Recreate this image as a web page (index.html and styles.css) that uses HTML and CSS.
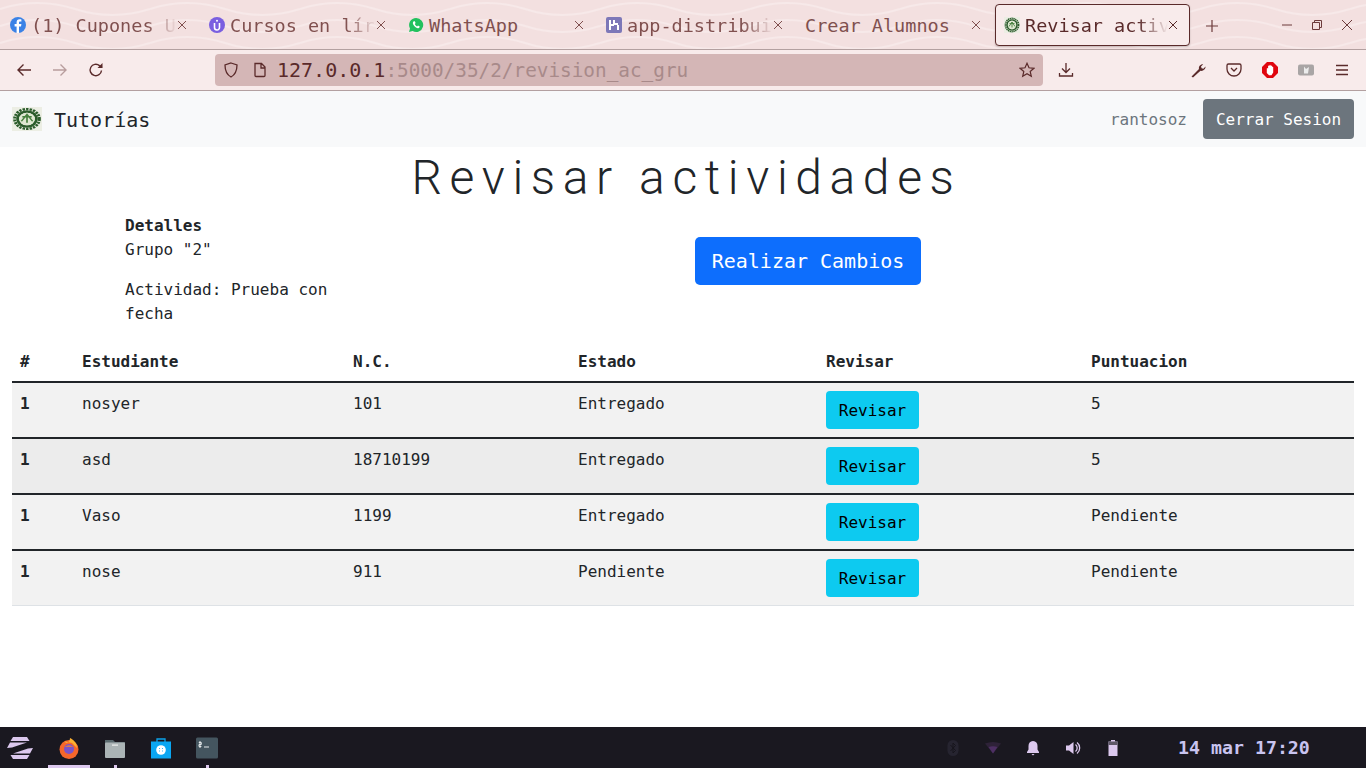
FILE: index.html
```html
<!DOCTYPE html>
<html lang="en">
<head>
    <meta charset="UTF-8">
    <meta name="viewport" content="width=device-width, initial-scale=1.0">
    <title>Revisar actividades</title>
    <link rel="stylesheet" href="styles.css">
</head>
<body>
    <header class="browser">
        <div class="tabbar">
            <svg class="waves" width="1366" height="49" aria-hidden="true">
                <defs>
                    <pattern id="wave" width="150" height="17" patternUnits="userSpaceOnUse">
                        <path d="M0 9 C25 1 50 1 75 9 S125 17 150 9" fill="none" stroke="#f7e9e9" stroke-width="2"/>
                    </pattern>
                </defs>
                <rect width="1366" height="49" fill="url(#wave)"/>
            </svg>
            <div class="tab tab-1">
                <svg class="favicon" viewBox="0 0 16 16"><circle cx="8" cy="8" r="8" fill="#3b82e6"/><path d="M9 16V9.500h2l.4-2.400H9V5.800c0-.8.3-1.200 1.200-1.200h1.200V2.500c-.5-.1-1.100-.2-1.800-.2-1.900 0-3 1.100-3 3.100v1.700H4.600v2.400h2V16z" fill="#fff"/></svg>
                <span class="tab-title fade">(1) Cupones U</span>
                <svg class="tab-close" viewBox="0 0 10 10"><path d="M1 1l8 8M9 1L1 9"/></svg>
            </div>
            <div class="tab tab-2">
                <svg class="favicon" viewBox="0 0 16 16"><circle cx="8" cy="8" r="8" fill="#7a5fe0"/><path d="M5.500 6v4.500a2.500 2.500 0 0 0 5 0V6" fill="none" stroke="#fff" stroke-width="1.600"/><circle cx="8" cy="3.800" r="1" fill="#fff"/></svg>
                <span class="tab-title fade">Cursos en lír</span>
                <svg class="tab-close" viewBox="0 0 10 10"><path d="M1 1l8 8M9 1L1 9"/></svg>
            </div>
            <div class="tab tab-3">
                <svg class="favicon" viewBox="0 0 16 16"><path d="M8 1a7 7 0 0 0-6 10.500L1 15l3.600-1A7 7 0 1 0 8 1z" fill="#22c15e"/><path d="M5.500 4.500c-1 1-.8 2.600.6 4.300 1.500 1.800 3.400 2.900 4.700 2.200.6-.3 1-1 .9-1.500L10 8.500l-.9.900C8.300 9 7.200 8 6.800 7l.8-.9L6.800 4.300c-.5-.1-1 0-1.300.2z" fill="#fff"/></svg>
                <span class="tab-title">WhatsApp</span>
                <svg class="tab-close" viewBox="0 0 10 10"><path d="M1 1l8 8M9 1L1 9"/></svg>
            </div>
            <div class="tab tab-4">
                <svg class="favicon" viewBox="0 0 16 16"><rect width="16" height="16" rx="2" fill="#7d78b8"/><path d="M4 3v10M4 8h4M8 3v4h4M12 8v5" fill="none" stroke="#fff" stroke-width="2"/></svg>
                <span class="tab-title fade">app-distribui</span>
                <svg class="tab-close" viewBox="0 0 10 10"><path d="M1 1l8 8M9 1L1 9"/></svg>
            </div>
            <div class="tab tab-5">
                <span class="tab-title">Crear Alumnos</span>
                <svg class="tab-close" viewBox="0 0 10 10"><path d="M1 1l8 8M9 1L1 9"/></svg>
            </div>
            <div class="tab tab-6">
                <svg class="favicon" viewBox="0 0 16 16"><use href="#seal"/></svg>
                <span class="tab-title fade">Revisar activ</span>
                <svg class="tab-close" viewBox="0 0 10 10"><path d="M1 1l8 8M9 1L1 9"/></svg>
            </div>
            <svg class="newtab" viewBox="0 0 12 12"><path d="M6 0v12M0 6h12" stroke="#6d3b3b" stroke-width="1.200"/></svg>
            <div class="window-controls">
                <svg viewBox="0 0 12 12"><path d="M1 6h10" stroke="#6d3b3b"/></svg>
                <svg viewBox="0 0 12 12"><path d="M1.500 3.500h7v7h-7zM3.500 3.500v-2h7v7h-2" fill="none" stroke="#6d3b3b"/></svg>
                <svg viewBox="0 0 12 12"><path d="M1 1l10 10M11 1L1 11" stroke="#6d3b3b"/></svg>
            </div>
        </div>
        <div class="toolbar">
            <div class="nav-buttons">
                <svg viewBox="0 0 16 16"><path d="M15 8H2M7.500 2.500L2 8l5.500 5.500" fill="none" stroke="#5a2a2a" stroke-width="1.400"/></svg>
                <svg class="dim" viewBox="0 0 16 16"><path d="M1 8h13M8.500 2.500L14 8l-5.500 5.500" fill="none" stroke="#5a2a2a" stroke-width="1.400"/></svg>
                <svg viewBox="0 0 16 16"><path d="M13.500 8.500A5.700 5.700 0 1 1 11.500 3.600L14 5.500" fill="none" stroke="#5a2a2a" stroke-width="1.400"/><path d="M14.500 1v5h-5z" fill="#5a2a2a"/></svg>
            </div>
            <div class="urlbar">
                <svg class="url-icon" viewBox="0 0 16 16"><path d="M8 1l6 2c0 6-1.500 9.500-6 12C3.500 12.500 2 9 2 3z" fill="none" stroke="#5a2a2a" stroke-width="1.300"/></svg>
                <svg class="url-icon" viewBox="0 0 16 16"><path d="M3 1.500h6.500L13 5v8.500a1 1 0 0 1-1 1H4a1 1 0 0 1-1-1zM9 2v4h4" fill="none" stroke="#5a2a2a" stroke-width="1.300"/></svg>
                <span class="url"><span class="host">127.0.0.1</span>:5000/35/2/revision_ac_gru</span>
                <svg class="url-star" viewBox="0 0 16 16"><path d="M8 1.300l2 4.500 4.900.5-3.700 3.200 1.100 4.800L8 11.800l-4.300 2.500 1.100-4.800L1.100 6.300 6 5.800z" fill="none" stroke="#5a2a2a" stroke-width="1.200"/></svg>
            </div>
            <svg class="tool tool-download" viewBox="0 0 16 16"><path d="M8 1v9M4 6.500L8 10.500l4-4M1.500 11v3h13v-3" fill="none" stroke="#5a2a2a" stroke-width="1.300"/></svg>
            <div class="tools-right">
                <svg class="tool" viewBox="0 0 16 16"><path d="M1.500 14.500L9 7c-.6-2.400 1.200-5 4.200-4.800L11 4.400l.6 1.800 1.800.6 2.100-2.200C15.700 7.500 13 9.400 10.500 8.800L3 15.500z" fill="#5a2a2a"/></svg>
                <svg class="tool" viewBox="0 0 16 16"><path d="M2.500 2h11A1.500 1.500 0 0 1 15 3.500V7A7 7 0 0 1 1 7V3.500A1.500 1.500 0 0 1 2.500 2z" fill="none" stroke="#5a2a2a" stroke-width="1.300"/><path d="M5 6l3 3 3-3" fill="none" stroke="#5a2a2a" stroke-width="1.300"/></svg>
                <svg class="tool" viewBox="0 0 16 16"><path d="M5 0h6l5 5v6l-5 5H5l-5-5V5z" fill="#e0060f"/><path d="M4.800 11V6.500a.7.700 0 0 1 1.300 0V4a.7.700 0 0 1 1.300 0V3.300a.7.700 0 0 1 1.300 0V4a.7.700 0 0 1 1.300 0v1a.7.700 0 0 1 1.200 0v5.500L9.500 13.200H7z" fill="#fff"/></svg>
                <svg class="tool" viewBox="0 0 16 16"><rect y="2.500" width="16" height="11" rx="2" fill="#a9a5a5"/><path d="M6 4.500l2 2.500 3-2-1 6.500H6z" fill="#ececec"/></svg>
                <svg class="tool" viewBox="0 0 16 16"><path d="M2 3.500h12M2 8h12M2 12.500h12" stroke="#5a2a2a" stroke-width="1.300"/></svg>
            </div>
        </div>
    </header>

    <nav class="navbar">
        <a class="brand">
            <svg class="seal" viewBox="0 0 16 16" preserveAspectRatio="none">
                <g id="seal">
                    <rect width="16" height="16" fill="#eceee4"/>
                    <circle cx="8" cy="8" r="6.600" fill="none" stroke="#2b5c2b" stroke-width="1.600" stroke-dasharray="1.300 .6"/>
                    <circle cx="8" cy="8" r="5" fill="none" stroke="#2b5c2b" stroke-width="1.600"/>
                    <circle cx="8" cy="8" r="4.200" fill="#dfe8d2"/>
                    <path d="M5 9.500L8 5l3 4.500M8 5v5.500M5.500 6.500h5" fill="none" stroke="#47813f" stroke-width=".9"/>
                </g>
            </svg>
            <span class="brand-name">Tutorías</span>
        </a>
        <div class="nav-user">
            <span class="username">rantosoz</span>
            <button class="btn btn-secondary">Cerrar Sesion</button>
        </div>
    </nav>

    <main class="content">
        <h1>Revisar actividades</h1>
        <div class="summary">
            <div class="details">
                <p><b>Detalles</b><br>Grupo "2"</p>
                <p>Actividad: Prueba con fecha</p>
            </div>
            <div class="actions">
                <button class="btn btn-primary">Realizar Cambios</button>
            </div>
        </div>
        <table class="grades">
            <thead>
                <tr><th>#</th><th>Estudiante</th><th>N.C.</th><th>Estado</th><th>Revisar</th><th>Puntuacion</th></tr>
            </thead>
            <tbody>
                <tr><th>1</th><td>nosyer</td><td>101</td><td>Entregado</td><td class="cell-btn"><button class="btn btn-info">Revisar</button></td><td>5</td></tr>
                <tr><th>1</th><td>asd</td><td>18710199</td><td>Entregado</td><td class="cell-btn"><button class="btn btn-info">Revisar</button></td><td>5</td></tr>
                <tr><th>1</th><td>Vaso</td><td>1199</td><td>Entregado</td><td class="cell-btn"><button class="btn btn-info">Revisar</button></td><td>Pendiente</td></tr>
                <tr><th>1</th><td>nose</td><td>911</td><td>Pendiente</td><td class="cell-btn"><button class="btn btn-info">Revisar</button></td><td>Pendiente</td></tr>
            </tbody>
        </table>
    </main>

    <footer class="taskbar">
        <svg class="zorin" viewBox="0 0 28 24"><path d="M7 1h14l2.500 4H4.500zM1 12l3-5.500h17L6 11.500zM27 12l-3 5.500H7l15-5zM7 23h14l2.500-4H4.500z" fill="#dcc8ee"/></svg>
        <div class="dock">
            <div class="dock-item active">
                <svg viewBox="0 0 22 22"><circle cx="11" cy="12.500" r="9.500" fill="#f5662a"/><path d="M5 4c2 0 2 2 4 2 2-1 3-3 3-5 4 2 7 5 7 10L14 6z" fill="#fbb030"/><circle cx="11" cy="12" r="5" fill="#7a53c8"/><path d="M7 10c2-2 6-2 8 0-2-.5-6-.5-8 0z" fill="#f5862a"/></svg>
            </div>
            <div class="dock-item running">
                <svg viewBox="0 0 22 22"><path d="M1 3h8l2 2h10v3H1z" fill="#5b6b70"/><rect x="1" y="5.500" width="20" height="15.500" rx="1" fill="#abb4b6"/><rect x="8" y="7.500" width="6" height="1.200" fill="#eef0f0"/></svg>
            </div>
            <div class="dock-item">
                <svg viewBox="0 0 22 22"><path d="M7 5V2h8v3" fill="none" stroke="#0ba2ea" stroke-width="1.300"/><rect x="1" y="4.500" width="20" height="17" fill="#0aa6f2"/><circle cx="11" cy="13" r="4.800" fill="#fff"/><path d="M9.200 11.500h.8M12 11.500h.8M9.200 14h.8M12 14h.8" stroke="#0aa6f2" stroke-width="1.200"/></svg>
            </div>
            <div class="dock-item running">
                <svg viewBox="0 0 22 22"><rect width="22" height="21" y=".5" rx="1.500" fill="#44555f"/><path d="M4 4v7M2.800 5.500h2.500v2H3v2h2.400M8 10h5" fill="none" stroke="#e4e8ea" stroke-width="1"/></svg>
            </div>
        </div>
        <div class="tray">
            <svg viewBox="0 0 12 16"><rect x=".5" width="11" height="16" rx="5.500" fill="#262430"/><path d="M3.500 5l5 5.500L6 13V3l2.500 2.500-5 5.500" fill="none" stroke="#17151c"/></svg>
            <svg viewBox="0 0 16 12"><path d="M0 1.500Q8-1.500 16 1.500L8 11.500z" fill="#2e2238"/><path d="M3.500 5Q8 3.500 12.500 5L8 11.500z" fill="#4d2f63"/></svg>
            <svg viewBox="0 0 16 16"><path d="M8 1c-3 0-4.500 2.200-4.500 5v3.500L2 12v1h12v-1l-1.500-2.500V6C12.500 3.200 11 1 8 1zM6.500 14h3L8 15.500z" fill="#dcc8ee"/></svg>
            <svg viewBox="0 0 16 16"><path d="M1 5.500h3L8.500 2v12L4 10.500H1z" fill="#dcc8ee"/><path d="M10.500 4.500a4.500 4.500 0 0 1 0 7M12 2.500a7 7 0 0 1 0 11" fill="none" stroke="#dcc8ee" stroke-width="1.300"/></svg>
            <svg viewBox="0 0 16 16"><path d="M6 0h4v1.500h2.500V16h-9V1.500H6z" fill="#dcc8ee"/><path d="M3.500 1.500h9V5h-9z" fill="#5f5868"/></svg>
        </div>
        <div class="clock">14 mar 17:20</div>
    </footer>
</body>
</html>
```

FILE: styles.css
```css
* {
    box-sizing: border-box;
}
body {
    font-family: "DejaVu Sans Mono", "Liberation Mono", monospace;
    margin: 0;
    height: 768px;
    overflow: hidden;
    display: flex;
    flex-direction: column;
    color: #212529;
    background-color: #fff;
}

/* browser chrome */
.browser {
    height: 91px;
    color: #5a2a2a;
}
.tabbar {
    height: 50px;
    position: relative;
    display: flex;
    padding-left: 2px;
    background-color: #f3e0e0;
    border-bottom: 1px solid #b3a0a0;
}
.waves {
    position: absolute;
    top: 0;
    left: 0;
}
.tab {
    position: relative;
    height: 42px;
    margin-top: 4px;
    padding: 0 14px 0 8px;
    display: flex;
    align-items: center;
    color: #80504f;
}
.tab-1, .tab-2, .tab-4 { width: 199px; }
.tab-3, .tab-5 { width: 198px; }
.tab-6 {
    width: 195px;
    padding-right: 11px;
    color: #5a2a2a;
    background-color: #f8ebeb;
    border: 1px solid #5a2a2a;
    border-radius: 4px;
    box-shadow: 0 1px 2px rgba(0,0,0,0.2);
}
.favicon {
    width: 16px;
    height: 16px;
    flex: none;
    margin-right: 5px;
}
.tab-title {
    flex: 1;
    min-width: 0;
    white-space: nowrap;
    font-size: 18.5px;
}
.tab-title.fade {
    -webkit-mask-image: linear-gradient(to left, transparent 0, #000 30px);
    mask-image: linear-gradient(to left, transparent 0, #000 30px);
}
.tab-close {
    flex: none;
    width: 10px;
    height: 10px;
    stroke: currentColor;
    stroke-width: 1;
}
.newtab {
    position: relative;
    width: 12px;
    height: 12px;
    margin: 20px 0 0 16px;
}
.window-controls {
    position: relative;
    margin: 19px 0 0 auto;
    padding-right: 13px;
    display: flex;
    gap: 18px;
}
.window-controls svg {
    width: 12px;
    height: 12px;
}
.toolbar {
    height: 41px;
    display: flex;
    align-items: center;
    background-color: #f8ebeb;
    border-bottom: 1px solid #b3a0a0;
}
.nav-buttons {
    width: 215px;
    padding-left: 16px;
    display: flex;
    gap: 20px;
}
.nav-buttons svg, .tool, .url-icon, .url-star {
    width: 16px;
    height: 16px;
    flex: none;
}
.dim {
    opacity: 0.4;
}
.urlbar {
    width: 828px;
    height: 32px;
    display: flex;
    align-items: center;
    padding: 0 8px;
    gap: 13px;
    border-radius: 4px;
    background-color: #d4b6b6;
}
.url {
    flex: 1;
    font-size: 19.35px;
    margin-left: -4px;
    color: #a88a8a;
}
.host {
    font-size: 20px;
    color: #5a2a2a;
}
.tool-download {
    margin-left: 15px;
}
.tools-right {
    margin-left: auto;
    padding-right: 16px;
    display: flex;
    gap: 20px;
}

/* page */
.navbar {
    height: 56px;
    flex: none;
    display: flex;
    align-items: center;
    justify-content: space-between;
    padding: 0 12px;
    background-color: #f8f9fa;
}
.brand {
    display: flex;
    align-items: center;
    gap: 12px;
    font-size: 20px;
    color: #212529;
}
.brand-name {
    padding-top: 2px;
}
.seal {
    width: 30px;
    height: 24px;
}
.nav-user {
    display: flex;
    align-items: center;
    gap: 16px;
}
.username {
    font-size: 16px;
    color: #6c757d;
}
.btn {
    font-family: inherit;
    font-size: 16px;
    border: none;
    border-radius: 4px;
    padding: 0;
}
.btn-secondary {
    width: 151px;
    height: 40px;
    color: #fff;
    background-color: #6c757d;
}
.btn-primary {
    width: 226px;
    height: 48px;
    font-size: 20px;
    color: #fff;
    background-color: #0d6efd;
    border-radius: 5px;
}
.btn-info {
    width: 93px;
    height: 38px;
    color: #000;
    background-color: #0dcaf0;
}
.content {
    flex: 1;
    padding: 0 12px;
}
h1 {
    margin: 2px 0 8px;
    padding-left: 7px;
    font-family: Roboto, "Liberation Sans", sans-serif;
    font-size: 48px;
    font-weight: 300;
    letter-spacing: 7.6px;
    line-height: 57px;
    text-align: center;
}
.summary {
    display: flex;
}
.details {
    width: 333px;
    padding: 0 12px 0 113px;
    font-size: 16px;
    line-height: 24px;
}
.details p {
    margin: 0 0 16px;
}
.actions {
    width: 593px;
    padding: 23px 17px 0 0;
    text-align: right;
}
.grades {
    width: 100%;
    border-collapse: collapse;
    table-layout: fixed;
    font-size: 16px;
    line-height: 24px;
}
.grades th, .grades td {
    padding: 9px 8px 7px;
    text-align: left;
    vertical-align: top;
}
.grades td.cell-btn {
    padding: 8px;
}
.grades thead th {
    padding: 8px 8px 7px;
    border-bottom: 2px solid #212529;
}
.grades th:nth-child(1) { width: 62px; }
.grades th:nth-child(2) { width: 271px; }
.grades th:nth-child(3) { width: 225px; }
.grades th:nth-child(4) { width: 248px; }
.grades th:nth-child(5) { width: 265px; }
.grades tbody tr {
    height: 56px;
    background-color: #f2f2f2;
    border-bottom: 2px solid #212529;
}
.grades tbody tr:nth-child(2) {
    background-color: #ececec;
}
.grades tbody tr:last-child {
    height: 55px;
    border-bottom: 1px solid #dee2e6;
}

/* desktop panel */
.taskbar {
    height: 41px;
    flex: none;
    display: flex;
    align-items: center;
    background-color: #1a1820;
}
.zorin {
    width: 28px;
    height: 24px;
    margin-left: 6px;
}
.dock {
    display: flex;
    margin-left: 12px;
    height: 100%;
}
.dock-item {
    width: 46px;
    position: relative;
    display: flex;
    align-items: center;
    justify-content: center;
}
.dock-item svg {
    width: 22px;
    height: 22px;
}
.dock-item.active::after {
    content: "";
    position: absolute;
    left: 2px;
    right: 2px;
    bottom: 0;
    height: 3px;
    background-color: #dcc8ee;
}
.dock-item.running::after {
    content: "";
    position: absolute;
    left: 22px;
    bottom: 0;
    width: 3px;
    height: 3px;
    background-color: #dcc8ee;
}
.tray {
    margin-left: auto;
    margin-right: 57px;
    display: flex;
    align-items: center;
    gap: 24px;
}
.tray svg {
    width: 16px;
    height: 16px;
}
.clock {
    width: 188px;
    font-size: 18.25px;
    font-weight: bold;
    color: #c9c4f0;
}
```
